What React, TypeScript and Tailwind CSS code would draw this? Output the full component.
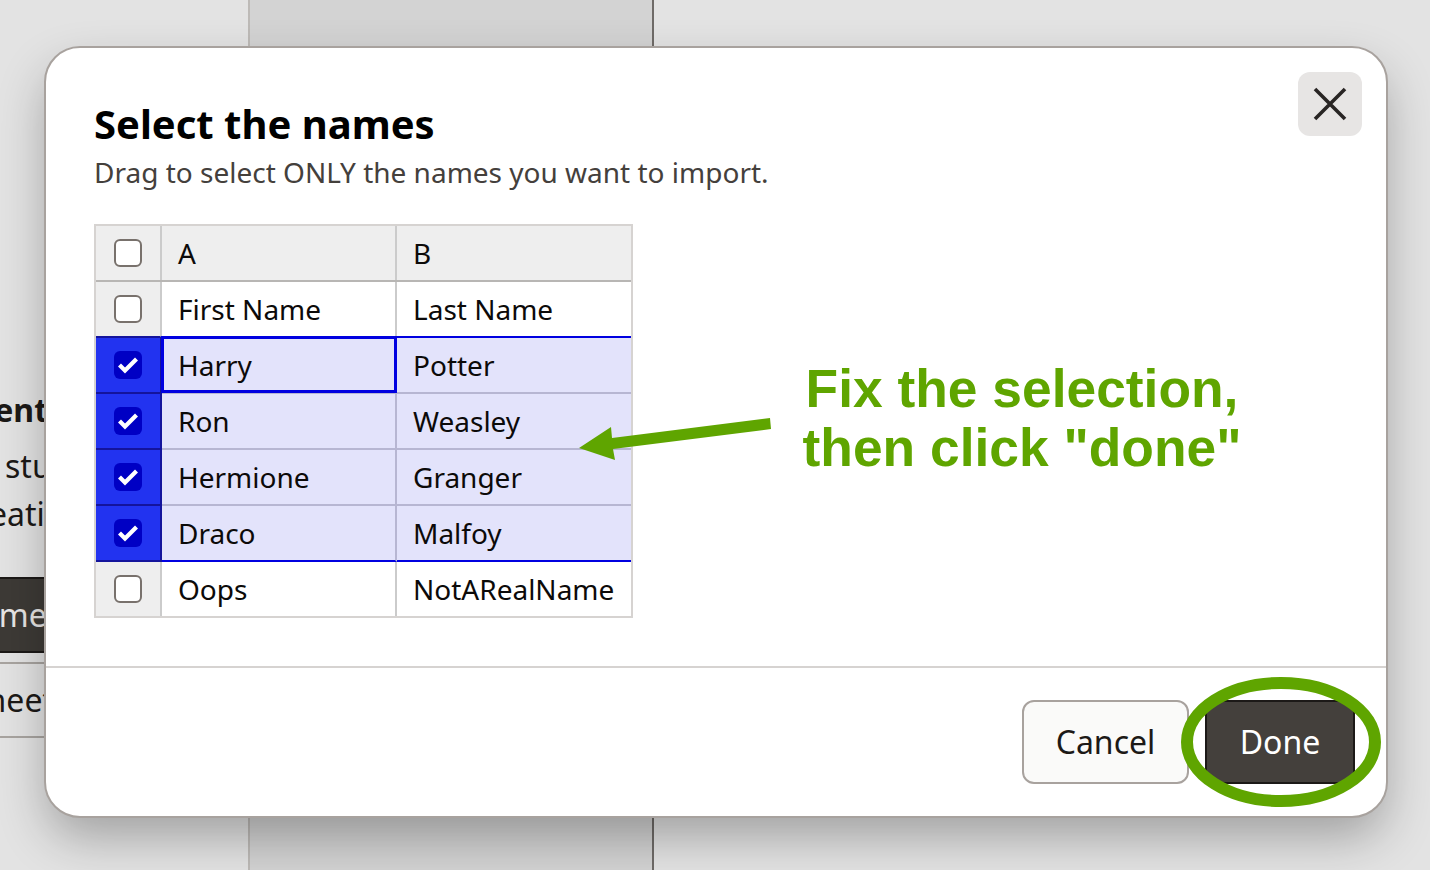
import React from "react";

const rows = [
  { a: "First Name", b: "Last Name", sel: false, line: "blue" },
  { a: "Harry", b: "Potter", sel: true, active: true, line: "soft" },
  { a: "Ron", b: "Weasley", sel: true, line: "soft" },
  { a: "Hermione", b: "Granger", sel: true, line: "soft" },
  { a: "Draco", b: "Malfoy", sel: true, line: "blue" },
  { a: "Oops", b: "NotARealName", sel: false, line: "none" },
];

function Box({ checked }: { checked?: boolean }) {
  if (checked) {
    return (
      <span className="block h-[28px] w-[28px] rounded-[6px] bg-[#0000c4]">
        <svg width="28" height="28" viewBox="0 0 28 28" fill="none">
          <path d="M5.5 14 L11 19.5 L22.5 8" stroke="#fff" strokeWidth="4.2" />
        </svg>
      </span>
    );
  }
  return <span className="block h-[28px] w-[28px] rounded-[6px] border-2 border-[#78716c] bg-white" />;
}

export default function App() {
  return (
    <div className="relative h-[870px] w-[1430px] overflow-hidden bg-[#e3e3e3] font-['Noto_Sans','Open_Sans',sans-serif] text-[#0c0a09]">
      {/* page behind the dialog */}
      <div className="flex h-full">
        <div className="w-[248px] shrink-0 overflow-hidden pt-[388px] text-[32px] leading-[44px] text-[#1c1917]">
          <div className="ml-[-81px] whitespace-nowrap font-bold">Content</div>
          <div className="ml-[5px] mt-[12px] whitespace-nowrap">students</div>
          <div className="ml-[-39px] mt-[4px] whitespace-nowrap">creating</div>
          <div className="ml-[-100px] mt-[41px] flex h-[76px] w-[200px] items-center rounded-[10px] border-2 border-[#1c1917] bg-[#3d3a36] pl-[59px] text-[#e7e5e4]">names</div>
          <div className="mt-[9px] flex h-[76px] items-center overflow-hidden border-y-2 border-[#a8a4a0]">
            <span className="ml-[-31px]">Sheet</span>
          </div>
        </div>
        <div className="h-full w-[406px] shrink-0 border-x-2 border-l-[#bdbab7] border-r-[#6f6b68] bg-[#d3d3d3]" />
        <div className="flex-1" />
      </div>

      {/* dialog */}
      <div className="absolute left-[44px] top-[46px] flex h-[772px] w-[1344px] flex-col rounded-[36px] border-2 border-[#a8a29e] bg-white shadow-[0_22px_50px_-4px_rgba(0,0,0,0.3)]">
        <div className="relative h-[620px] shrink-0 border-b-2 border-[#d6d3d1] pl-[48px] pt-[48px]">
          <div className="text-[40px] font-bold leading-[56px] text-black">Select the names</div>
          <div className="mt-[-2px] text-[28px] leading-[44px] text-[#44403c]">Drag to select ONLY the names you want to import.</div>

          <div className="mt-[30px] flex items-center">
            <div className="w-[539px] border-2 border-[#d6d3d1] text-[28px] leading-[38px]">
              <div className="flex h-[56px] border-b-2 border-[#b8b6b4] bg-[#eeeeee]">
                <div className="flex w-[66px] items-center justify-center border-r-2 border-[#cbcbcb]"><Box /></div>
                <div className="flex w-[235px] items-center border-r-2 border-[#cbcbcb] pl-[16px]">A</div>
                <div className="flex flex-1 items-center pl-[16px]">B</div>
              </div>
              {rows.map((r) => {
                const lineClass =
                  r.line === "blue" ? "border-b-2 border-b-[#0000e0]" : r.line === "soft" ? "border-b-2 border-b-[#b7b6d2]" : "";
                return (
                  <div key={r.a} className={r.line === "none" ? "flex h-[54px]" : "flex h-[56px]"}>
                    <div
                      className={
                        r.sel
                          ? "flex w-[66px] items-center justify-center border-r-2 border-b-2 border-[#14149c] bg-[#2233f0]"
                          : r.line === "blue"
                            ? "flex w-[66px] items-center justify-center border-r-2 border-b-2 border-r-[#cbcbcb] border-b-[#14149c] bg-[#eeeeee]"
                            : "flex w-[66px] items-center justify-center border-r-2 border-[#cbcbcb] bg-[#eeeeee]"
                      }
                    >
                      <Box checked={r.sel} />
                    </div>
                    <div
                      className={
                        (r.sel
                          ? "relative flex w-[235px] items-center border-r-2 border-r-[#b7b6d2] bg-[#e3e3fb] pl-[16px] "
                          : "flex w-[235px] items-center border-r-2 border-r-[#cbcbcb] bg-white pl-[16px] ") + lineClass
                      }
                    >
                      {r.a}
                      {r.active ? (
                        <span className="absolute bottom-[-1px] left-[-1px] right-[-2px] top-[-2px] border-[3px] border-[#0000e0]" />
                      ) : null}
                    </div>
                    <div
                      className={
                        (r.sel
                          ? "flex flex-1 items-center whitespace-nowrap bg-[#e3e3fb] pl-[16px] "
                          : "flex flex-1 items-center whitespace-nowrap bg-white pl-[16px] ") + lineClass
                      }
                    >
                      {r.b}
                    </div>
                  </div>
                );
              })}
            </div>
            <div className="ml-[169px] mt-[-6px] w-[440px] text-center font-['Liberation_Sans',Arial,sans-serif] text-[53.35px] font-bold leading-[59px] text-[#5fa500]">
              <div className="whitespace-nowrap">Fix the selection,</div>
              <div className="whitespace-nowrap">then click "done"</div>
            </div>
          </div>

          <button className="absolute right-[24px] top-[24px] flex h-[64px] w-[64px] items-center justify-center rounded-[12px] bg-[#e7e5e4]">
            <svg width="34" height="34" viewBox="0 0 34 34" fill="none">
              <path d="M2 2 L32 32 M32 2 L2 32" stroke="#292524" strokeWidth="3.6" />
            </svg>
          </button>

          <svg className="absolute left-[531px] top-[368px]" width="196" height="46" viewBox="0 0 196 46">
            <polygon points="193,2 194,13 36,33 38,44 2,32 34,11 35,22" fill="#5fa500" />
          </svg>
        </div>

        <div className="flex flex-1 items-center justify-end gap-[16px] pr-[31px] text-[32px]">
          <button className="h-[84px] w-[167px] rounded-[12px] border-2 border-[#a8a29e] bg-[#fafaf9] text-[#1c1917]">Cancel</button>
          <button className="relative h-[84px] w-[150px] rounded-[12px] border-2 border-[#1c1917] bg-[#44403c] text-white">
            Done
            <svg className="absolute left-[-26px] top-[-25px]" width="200" height="130" viewBox="0 0 200 130" fill="none">
              <ellipse cx="100" cy="65" rx="94" ry="59" stroke="#5fa500" strokeWidth="12" />
            </svg>
          </button>
        </div>
      </div>
    </div>
  );
}
